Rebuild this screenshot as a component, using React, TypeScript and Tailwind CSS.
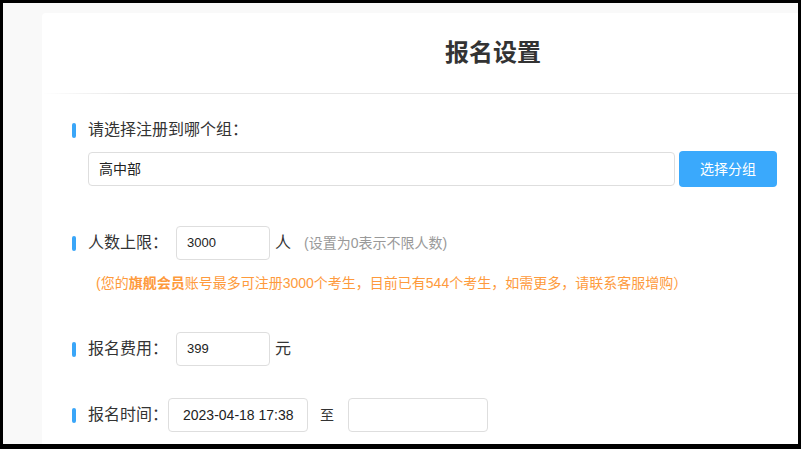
import React from "react";

const FONT = {
  fontFamily:
    '"Liberation Sans", "Noto Sans CJK SC", "Noto Sans", sans-serif',
};

function Bar() {
  return <span className="mr-3 h-[15px] w-1 shrink-0 rounded-full bg-[#3aa6f8]" />;
}

export default function App() {
  return (
    <div
      style={FONT}
      className="flex h-[449px] w-[801px] flex-col bg-black pb-[5px] pl-[3px] pr-[3px] pt-[3px]"
    >
      <div className="flex flex-1 bg-[#f9f9f9] pl-[39px] pt-[10px]">
        <div className="flex flex-1 flex-col rounded-tl-[4px] bg-white">
          {/* Header */}
          <div className="flex h-20 items-center pl-[403px]">
            <h1 className="text-[24px] font-bold text-[#333]">报名设置</h1>
          </div>
          <div className="flex h-px">
            <div className="w-[90px] bg-gradient-to-r from-white to-[#e6e6e6]" />
            <div className="flex-1 bg-[#e6e6e6]" />
          </div>

          <div className="flex flex-col pl-[30px] text-[16px] text-[#333]">
            {/* Group */}
            <div className="mt-[26px] flex h-5 items-center">
              <Bar />
              <span>请选择注册到哪个组：</span>
            </div>
            <div className="mt-[11px] flex h-9 items-center pl-4">
              <div className="flex h-[34px] w-[587px] items-center rounded-[4px] border border-[#dedede] px-[10px] text-[14px] text-[#222]">
                高中部
              </div>
              <button className="ml-1 h-9 w-[98px] rounded-[4px] bg-[#3aa9fc] text-[14px] text-white">
                选择分组
              </button>
            </div>

            {/* Limit */}
            <div className="mt-[39px] flex h-[34px] items-center">
              <Bar />
              <span className="w-[88px]">人数上限：</span>
              <div className="flex h-[34px] w-[94px] items-center rounded-[4px] border border-[#dedede] px-[10px] text-[13px] text-[#222]">
                3000
              </div>
              <span className="ml-[5px] text-[16px]">人</span>
              <span className="ml-[13px] text-[14px] text-[#999]">
                (设置为0表示不限人数)
              </span>
            </div>
            <div className="mt-[13px] flex h-5 items-center pl-[24px] text-[14px] text-[#fe9a3c]">
              (您的<b className="font-bold">旗舰会员</b>
              账号最多可注册3000个考生，目前已有544个考生，如需更多，请联系客服增购）
            </div>

            {/* Fee */}
            <div className="mt-[39px] flex h-[34px] items-center">
              <Bar />
              <span className="w-[88px]">报名费用：</span>
              <div className="flex h-[34px] w-[94px] items-center rounded-[4px] border border-[#dedede] px-[10px] text-[13px] text-[#222]">
                399
              </div>
              <span className="ml-[5px] text-[16px]">元</span>
            </div>

            {/* Time */}
            <div className="mt-[32px] flex h-[34px] items-center">
              <Bar />
              <span className="w-[80px]">报名时间：</span>
              <div className="flex h-[34px] w-[140px] items-center whitespace-nowrap rounded-[4px] border border-[#dedede] px-[14px] text-[14px] text-[#222]">
                2023-04-18 17:38
              </div>
              <span className="ml-3 text-[14px]">至</span>
              <div className="ml-[14px] h-[34px] w-[140px] rounded-[4px] border border-[#dedede]" />
            </div>
          </div>
        </div>
      </div>
    </div>
  );
}
